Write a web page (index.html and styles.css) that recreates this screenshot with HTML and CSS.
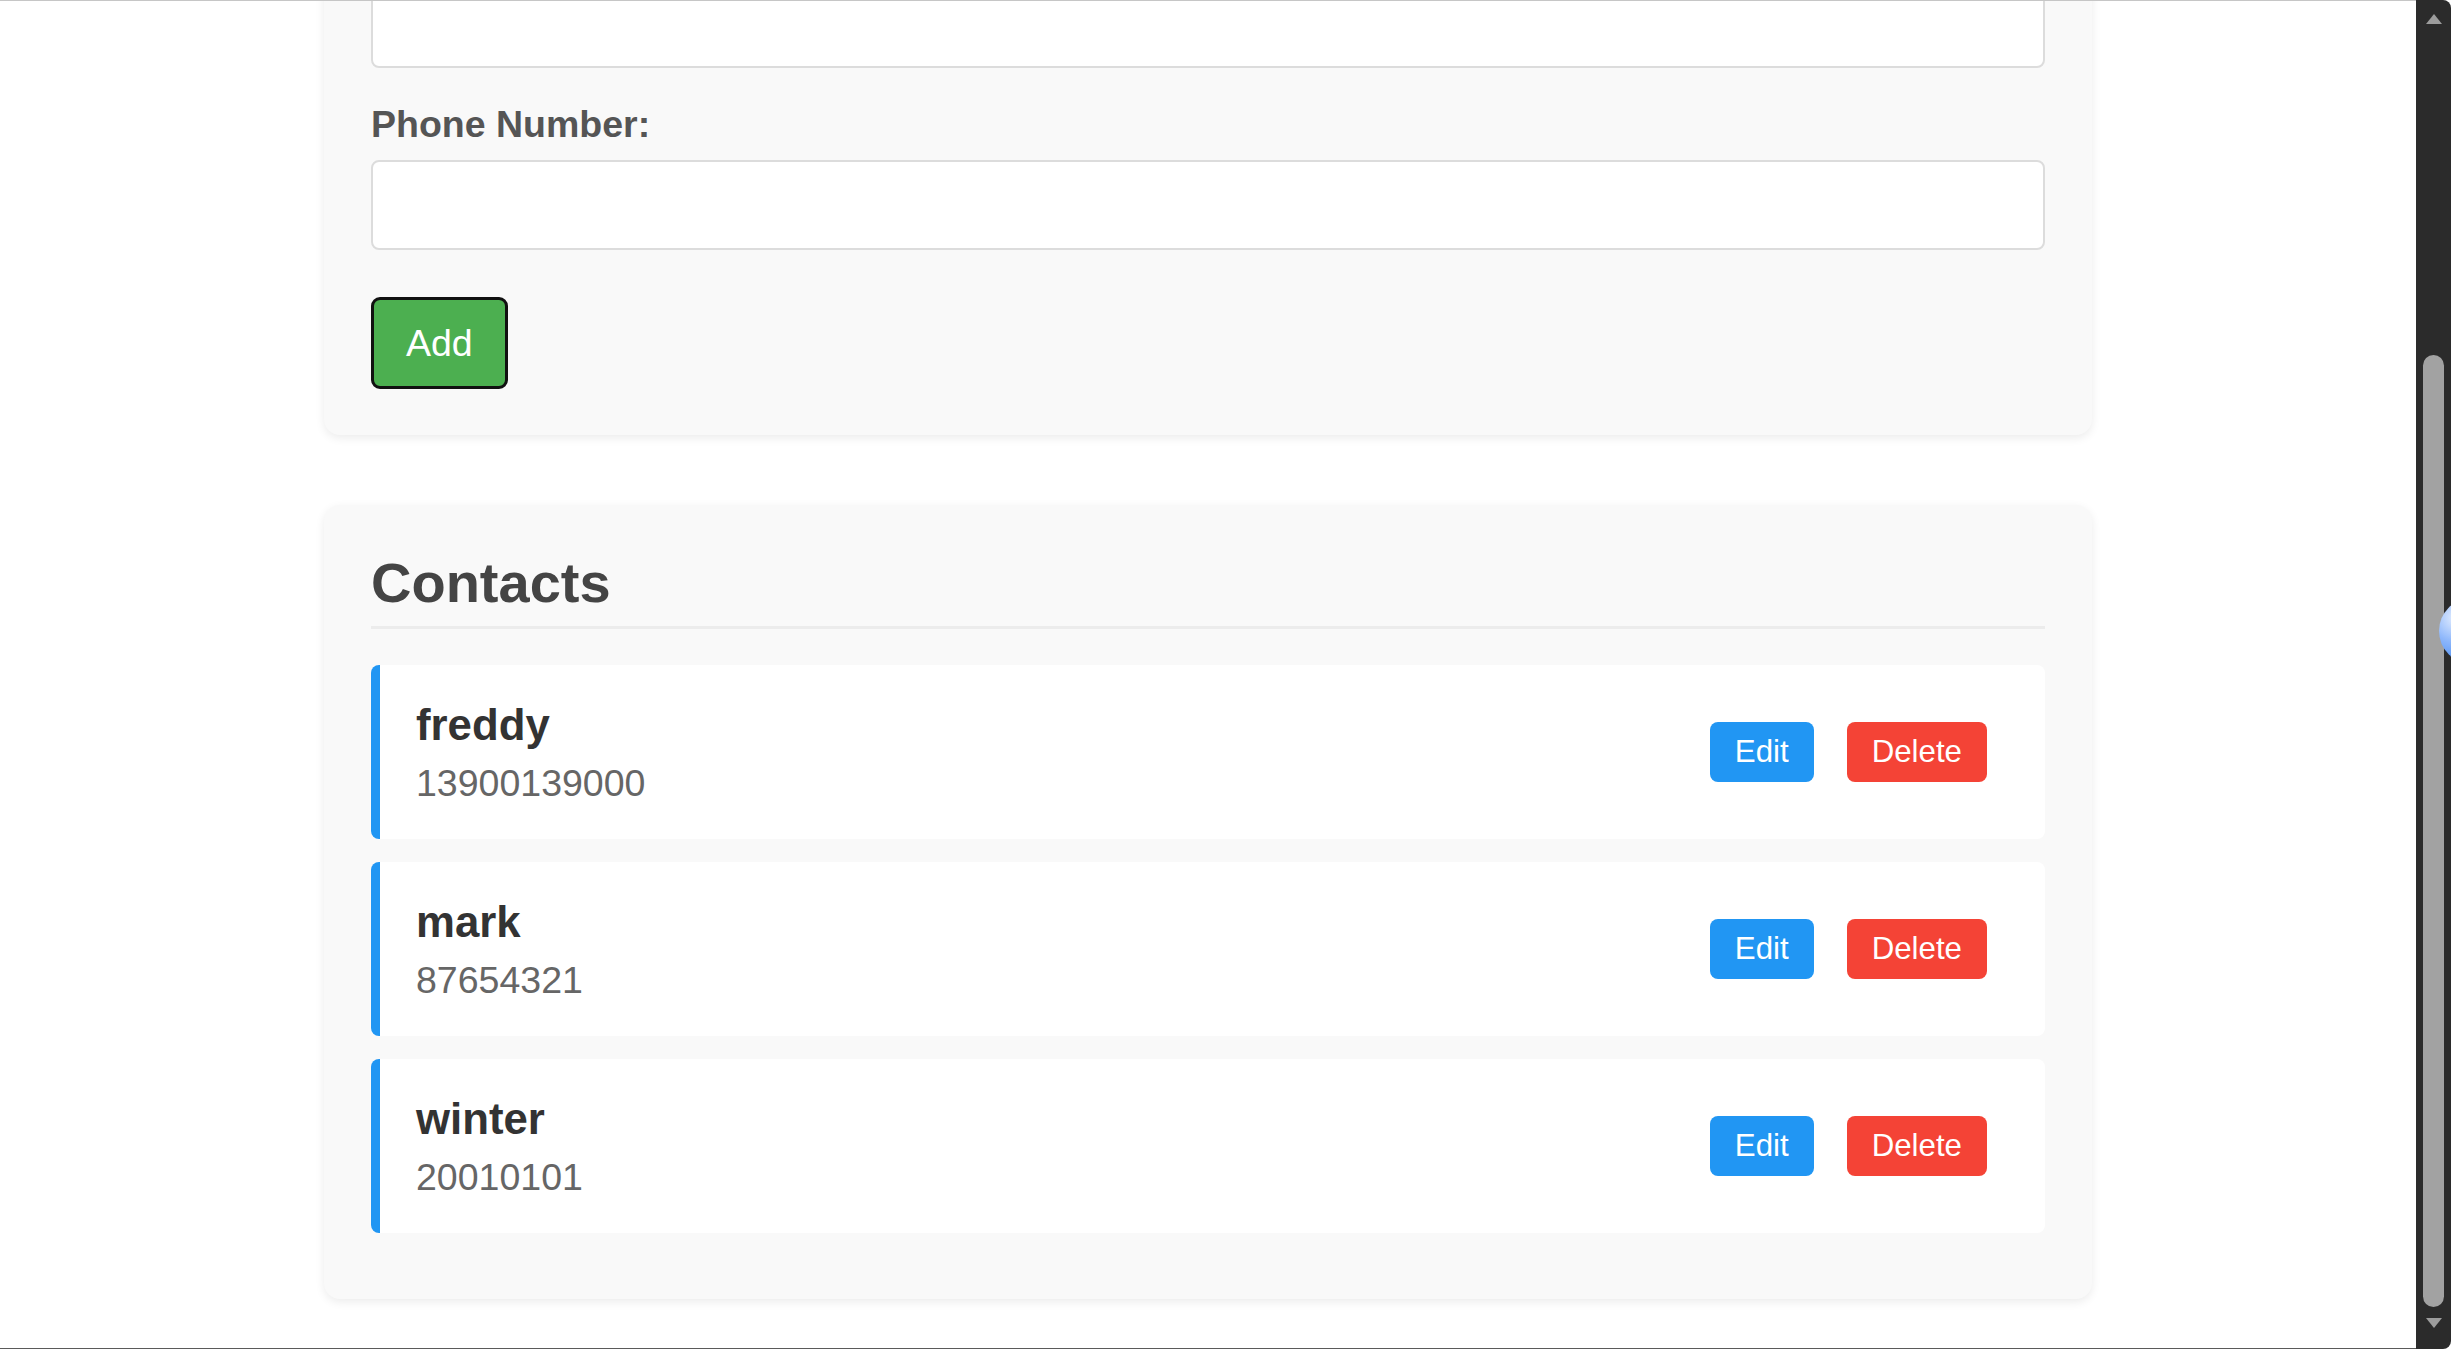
FILE: index.html
```html
<!DOCTYPE html>
<html lang="en">
<head>
<meta charset="utf-8">
<title>Contacts</title>
<link rel="stylesheet" href="styles.css">
</head>
<body>
<div class="window">
  <main class="viewport">
    <div class="container">
      <section class="card form-card">
        <input class="field" type="text" aria-label="Name">
        <label class="label" for="phone">Phone Number:</label>
        <input class="field" id="phone" type="text">
        <button class="add-btn" type="button">Add</button>
      </section>
      <section class="card list-card">
        <h2 class="title">Contacts</h2>
        <ul class="list">
          <li class="item">
            <div class="info">
              <div class="name">freddy</div>
              <div class="phone">13900139000</div>
            </div>
            <div class="actions">
              <button class="btn edit" type="button">Edit</button>
              <button class="btn delete" type="button">Delete</button>
            </div>
          </li>
          <li class="item">
            <div class="info">
              <div class="name">mark</div>
              <div class="phone">87654321</div>
            </div>
            <div class="actions">
              <button class="btn edit" type="button">Edit</button>
              <button class="btn delete" type="button">Delete</button>
            </div>
          </li>
          <li class="item">
            <div class="info">
              <div class="name">winter</div>
              <div class="phone">20010101</div>
            </div>
            <div class="actions">
              <button class="btn edit" type="button">Edit</button>
              <button class="btn delete" type="button">Delete</button>
            </div>
          </li>
        </ul>
      </section>
    </div>
  </main>
  <aside class="scrollbar">
    <svg class="arrow" width="16" height="10" viewBox="0 0 16 10"><path d="M8 0 L16 10 L0 10 Z" fill="#9c9c9c"/></svg>
    <div class="thumb"></div>
    <svg class="arrow down" width="16" height="10" viewBox="0 0 16 10"><path d="M0 0 L16 0 L8 10 Z" fill="#9c9c9c"/></svg>
  </aside>
  <div class="bubble"></div>
</div>
</body>
</html>
```
FILE: styles.css
```css
html, body {
  margin: 0;
  padding: 0;
  height: 100%;
  overflow: hidden;
  background: #fff;
  font-family: "Liberation Sans", Arial, sans-serif;
}

.window {
  display: flex;
  height: 1349px;
  position: relative;
  overflow: hidden;
}

.viewport {
  flex: 1;
  height: 1349px;
  box-sizing: border-box;
  border-top: 1px solid #c6c6c6;
  border-bottom: 1px solid #5a5a5a;
  overflow: hidden;
  background: #fff;
}

.container {
  width: 1768px;
  margin: -70px auto 0;
}

.card {
  background: #f9f9f9;
  border-radius: 16px;
  box-shadow: 0 3px 10px rgba(0, 0, 0, 0.08);
  padding: 47px;
  box-sizing: border-box;
}

.form-card {
  padding-bottom: 46px;
  margin-bottom: 70px;
}

.field {
  display: block;
  width: 100%;
  height: 90px;
  box-sizing: border-box;
  border: 2px solid #dcdcdc;
  border-radius: 8px;
  background: #fff;
  margin: 0;
}

.label {
  display: block;
  font-size: 37.5px;
  font-weight: bold;
  color: #555;
  line-height: 42px;
  margin: 35px 0 15px;
}

.add-btn {
  display: block;
  margin-top: 47px;
  height: 92px;
  padding: 0 32px;
  border: 3px solid #111;
  border-radius: 9px;
  background: #4caf50;
  color: #fff;
  font-size: 37.5px;
  font-family: inherit;
  line-height: 86px;
}

.list-card {
  padding-bottom: 43px;
}

.title {
  margin: 0 0 36px;
  font-size: 56px;
  line-height: 62px;
  font-weight: bold;
  color: #444;
  padding-bottom: 12px;
  border-bottom: 3px solid #ececec;
}

.list {
  list-style: none;
  margin: 0;
  padding: 0;
}

.item {
  display: flex;
  align-items: center;
  justify-content: space-between;
  height: 174px;
  box-sizing: border-box;
  margin-bottom: 23px;
  padding: 0 58px 0 36px;
  background: #fff;
  border-left: 9px solid #2196f3;
  border-radius: 8px;
}

.name {
  font-size: 43.75px;
  line-height: 49px;
  font-weight: bold;
  color: #333;
}

.phone {
  margin-top: 12.5px;
  font-size: 37.5px;
  line-height: 42px;
  color: #666;
}

.actions {
  display: flex;
  gap: 33px;
}

.btn {
  height: 60px;
  padding: 0 25px;
  border: 0;
  border-radius: 8px;
  color: #fff;
  font-size: 31.25px;
  font-family: inherit;
  line-height: 60px;
}

.edit {
  background: #2196f3;
}

.delete {
  background: #f44336;
}

.scrollbar {
  width: 35px;
  height: 1349px;
  background: #2b2b2b;
  border-radius: 0 8px 8px 0;
  display: flex;
  flex-direction: column;
  align-items: center;
  padding-top: 14px;
  box-sizing: border-box;
}

.arrow {
  display: block;
  flex: none;
}

.thumb {
  width: 21px;
  height: 952px;
  margin-top: 331px;
  background: #a2a2a2;
  border-radius: 11px;
}

.arrow.down {
  margin-top: 11px;
}

.bubble {
  position: absolute;
  left: 2439px;
  top: 598px;
  width: 66px;
  height: 66px;
  border-radius: 50%;
  background: radial-gradient(circle at 25% 30%, #e4eeff 0%, #8fb8fb 35%, #4d8ff3 70%, #2f76e6 100%);
}
```
